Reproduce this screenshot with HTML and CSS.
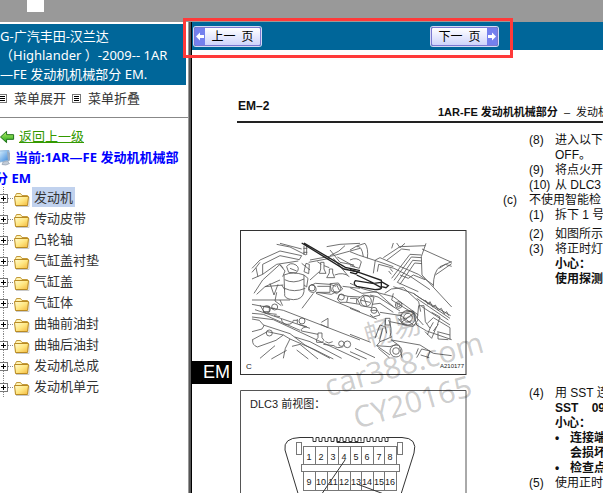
FILE: index.html
```
<!DOCTYPE html>
<html lang="zh-CN">
<head>
<meta charset="utf-8">
<title>广汽丰田-汉兰达 维修手册</title>
<link rel="stylesheet" href="styles.css">
</head>
<body>
<svg class="defs" aria-hidden="true">
  <defs>
    <linearGradient id="gold" x1="0" y1="0" x2="1" y2="1"><stop offset="0" stop-color="#fffbd0"/><stop offset=".5" stop-color="#ffe783"/><stop offset="1" stop-color="#f3b83c"/></linearGradient>
    <linearGradient id="leaf" x1="0" y1="0" x2="0" y2="1"><stop offset="0" stop-color="#b8f06a"/><stop offset="1" stop-color="#1fa51a"/></linearGradient>
    <linearGradient id="screen" x1="0" y1="0" x2="1" y2="1"><stop offset="0" stop-color="#d9f1ff"/><stop offset="1" stop-color="#2f80d8"/></linearGradient>
    <symbol id="folder" viewBox="0 0 16 15">
      <path d="M2 14.5h13V5" fill="none" stroke="#c9c9c9"/>
      <path d="M1.5 12.500V3.500L2.500 1.500H6.500L8 3.500H13.500V5" fill="#fff3b0" stroke="#c39a3b"/>
      <path d="M.5 4.500H14.500L13.500 13.500H1.500Z" fill="url(#gold)" stroke="#b98a22"/>
    </symbol>
    <symbol id="plus" viewBox="0 0 14 21">
      <path d="M3.500 0V21" stroke="#888" stroke-dasharray="1 1"/>
      <path d="M8 11.500H14" stroke="#888" stroke-dasharray="1 1"/>
      <rect x="-.5" y="7.500" width="8" height="8" fill="#fff" stroke="#777"/>
      <path d="M1 11.500H6M3.500 9V14" stroke="#000"/>
    </symbol>
    <symbol id="menu" viewBox="0 0 9 9">
      <rect x=".5" y=".5" width="8" height="8" fill="#fff" stroke="#777"/>
      <path d="M2 2.500H7M2 4.500H7M2 6.500H7" stroke="#000"/>
    </symbol>
  </defs>
</svg>

<header class="topband"><span class="chip"></span></header>

<div class="frames">
  <aside class="sidebar">
    <h1 class="book">G-广汽丰田-汉兰达<br>（Highlander ）-2009-- 1AR<br>—FE 发动机机械部分 EM.</h1>
    <div class="tools">
      <button type="button"><svg class="menu-icon"><use href="#menu"/></svg>菜单展开</button>
      <button type="button"><svg class="menu-icon"><use href="#menu"/></svg>菜单折叠</button>
    </div>
    <nav class="nav">
      <a class="back" href="#"><svg class="back-icon" viewBox="0 0 16 14"><path d="M.5 7L7 1V4.500H14.500V9.500H7V13Z" fill="url(#leaf)" stroke="#176b12"/></svg><span>返回上一级</span></a>
      <p class="current"><svg class="pc-icon" viewBox="0 0 20 16"><path d="M4 1L14 .5L14.500 10L5 12Z" fill="url(#screen)" stroke="#8db6dc"/><path d="M12 1L15 3V10L13 12" fill="#9aaabe"/><path d="M8 12L12 11L14.500 13.500Q11 16 7 14.500Z" fill="#c3ccd8" stroke="#8a97a8" stroke-width=".6"/></svg>当前:1AR—FE 发动机机械部<br>分 EM</p>
      <ul class="tree">
        <li><svg class="plus"><use href="#plus"/></svg><svg class="folder"><use href="#folder"/></svg><a class="selected" href="#">发动机</a></li>
        <li><svg class="plus"><use href="#plus"/></svg><svg class="folder"><use href="#folder"/></svg><a href="#">传动皮带</a></li>
        <li><svg class="plus"><use href="#plus"/></svg><svg class="folder"><use href="#folder"/></svg><a href="#">凸轮轴</a></li>
        <li><svg class="plus"><use href="#plus"/></svg><svg class="folder"><use href="#folder"/></svg><a href="#">气缸盖衬垫</a></li>
        <li><svg class="plus"><use href="#plus"/></svg><svg class="folder"><use href="#folder"/></svg><a href="#">气缸盖</a></li>
        <li><svg class="plus"><use href="#plus"/></svg><svg class="folder"><use href="#folder"/></svg><a href="#">气缸体</a></li>
        <li><svg class="plus"><use href="#plus"/></svg><svg class="folder"><use href="#folder"/></svg><a href="#">曲轴前油封</a></li>
        <li><svg class="plus"><use href="#plus"/></svg><svg class="folder"><use href="#folder"/></svg><a href="#">曲轴后油封</a></li>
        <li><svg class="plus"><use href="#plus"/></svg><svg class="folder"><use href="#folder"/></svg><a href="#">发动机总成</a></li>
        <li><svg class="plus"><use href="#plus"/></svg><svg class="folder"><use href="#folder"/></svg><a href="#">发动机单元</a></li>
      </ul>
    </nav>
  </aside>

  <main class="reader">
    <div class="pager">
      <button type="button" class="page-btn"><svg class="arrow" viewBox="0 0 10 17"><path d="M1 8.500L5 4.500V7H9V10H5V12.500Z" fill="#fff"/></svg><span>上一&nbsp; 页</span></button>
      <button type="button" class="page-btn"><span>下一&nbsp; 页</span><svg class="arrow" viewBox="0 0 10 17"><path d="M9 8.500L5 4.500V7H1V10H5V12.500Z" fill="#fff"/></svg></button>
    </div>

    <article class="sheet">
      <div class="sheet-head">
        <strong class="folio">EM–2</strong>
        <span class="chapter"><b>1AR-FE 发动机机械部分</b> &nbsp;– &nbsp;发动机</span>
      </div>
      <div class="sheet-body">
        <span class="tab">EM</span>
        <div class="figures">
          <svg class="figure" viewBox="240 230 227 145" role="img" aria-label="发动机舱">
            <g transform="translate(230 225) scale(.33333)" fill="none" stroke="#555" stroke-width="2.500">
              <path d="M140 58L180 66L228 90M150 55L215 72M66 130L90 105L150 78L215 92L208 104L150 92L98 118L98 148L66 162M66 142L78 128L90 112M78 128L84 156M98 148L140 118L205 108M72 205L98 165L150 118L160 130M80 208L105 185L150 165M105 185L160 180"/>
              <path d="M162 150Q190 138 222 150V200Q218 224 190 224Q160 222 164 205ZM164 164Q190 178 222 162M164 190Q192 204 226 190M155 180L165 195M170 125Q180 110 198 120Q212 130 198 144L176 142ZM180 130L200 138M150 120L165 138L158 155M222 150L234 160L230 186L222 180"/>
              <path d="M222 62V90M230 62V90M220 70H232M220 82H232M240 105L310 92L390 70M236 112L300 100M290 65L330 58L390 55M300 92Q330 80 345 62M300 75L330 112L372 120M310 100L352 150M322 96L375 125"/>
              <path d="M228 115L238 118L236 146L222 140ZM215 115L240 135M272 112H282V132L288 145H268L272 132ZM298 132H308V144L314 158H290L298 144ZM282 122L298 128M262 110L274 118M314 150Q340 140 358 155"/>
              <path d="M240 165L268 140M246 180L256 175L300 178L318 184M258 202L304 208L320 200M250 205L216 250M246 178Q234 182 236 196Q248 208 258 198Q260 182 246 178ZM262 184H300V202H262M300 176L325 174L338 192L320 206L304 198ZM320 180L328 196M338 184L390 190M330 208L354 214L350 232H330L322 222ZM354 214L390 216M350 232L390 238M258 205L390 260M360 220H380V235"/>
              <path d="M66 225H180M66 238L160 256L390 345M75 254L240 310M66 265L100 268L210 316M66 276L130 284L390 405M90 240L104 264L140 268M98 244H118V260H100M122 250H134M140 202L135 228L154 242M120 175L132 210L144 178M150 225L158 242"/>
              <circle cx="134" cy="246" r="9"/><circle cx="110" cy="253" r="11"/><circle cx="216" cy="288" r="9"/><circle cx="118" cy="324" r="9"/><circle cx="352" cy="358" r="10"/><circle cx="334" cy="356" r="8"/><circle cx="334" cy="216" r="9"/><circle cx="246" cy="189" r="9"/><circle cx="320" cy="190" r="12"/>
              <path d="M154 282Q158 300 172 298Q188 298 190 286H202M202 282V296M132 272L150 275M206 298L230 305Q210 310 214 318L264 328M260 352Q256 342 264 338V324H276V338L282 346L276 352ZM280 358L312 362Q320 372 340 365M274 292L294 280V308L272 298M286 350Q296 358 308 350M66 282L88 286L102 302L96 312L66 320M66 345L112 320L160 330L138 346L82 366Q66 360 68 345M100 300L180 326L225 360L300 400M160 330L180 342L166 370L160 400M90 400L135 362M124 402L170 376M180 342L250 372L310 402M194 336L240 350L335 400M186 364L210 358L264 402M200 375L235 402"/>
              <path d="M215 54L342 132L390 142M222 54L346 127L390 137" stroke="#222" stroke-width="4"/>
            </g>
            <g transform="translate(350 225) scale(.33333)" fill="none" stroke="#555" stroke-width="2.500">
              <path d="M0 75Q20 60 45 55Q56 70 52 100M20 65Q35 60 40 95M0 80L25 90L80 108L130 125M0 105Q20 95 34 110L28 130L0 122M70 145L76 105L90 98L140 120L205 148L250 180M82 140L86 118L132 130L182 155L240 194M100 98L150 65L226 62M110 106L155 72L180 75M140 54L150 68L165 55M130 54L125 70"/>
              <path d="M228 55L214 95L216 150L305 246M216 72L305 112M250 185Q250 140 270 125L305 110M256 150L305 116M268 130L286 118L305 124M214 90L180 88L125 160M214 98L184 96L132 166M214 108L188 106L142 172M216 116L194 114L150 178M150 150L175 160L190 150L225 164M142 172L205 200M130 185L190 205L300 280M120 130L128 140M116 138L124 148"/>
              <path d="M0 175L40 192L130 215L150 230L205 270M0 188L36 205L80 200L130 245M22 222L40 210L72 216L65 248L32 242ZM30 225L60 232M40 212L50 242M60 210L84 216L150 258M66 238L90 235L130 262M62 256H82L90 270L70 276L60 268M90 262L155 272M104 205L124 192L160 188L206 230L212 260M130 205L125 225L195 268"/>
              <circle cx="48" cy="228" r="16"/><circle cx="72" cy="256" r="9"/><circle cx="146" cy="240" r="10"/><circle cx="146" cy="240" r="5"/><circle cx="174" cy="278" r="22"/><circle cx="174" cy="278" r="13"/><circle cx="138" cy="378" r="18"/><circle cx="138" cy="378" r="10"/>
              <path d="M206 242H222L226 290L240 310L232 330M206 242L202 280L220 300M145 264L190 258L204 285L190 304L160 300L145 280M150 270L190 300M154 292L192 264M190 205L208 218L302 272M200 220L295 285M214 244L300 300M226 225L234 238L240 230L248 246L256 240L265 256L274 250L282 266L290 260L296 272M245 262L270 276L262 300M232 295L250 278L270 290L300 308V344M240 310L250 292M250 318L265 298M225 320L245 340L260 304M262 320L300 330M264 322V342L295 344M190 262L200 300L230 318L305 344"/>
              <path d="M106 285Q102 300 110 325M116 285Q128 310 120 335M106 280H120V300H106ZM120 290L170 300M126 335Q105 345 90 350L80 362L120 365L140 358M88 350L98 310M75 340L90 300L104 305M80 362L120 390M85 370L118 398M124 345L210 360L250 385L305 392M124 345L148 362L156 398M0 250L80 282M0 328L62 352M15 370L75 398M0 380L50 402M200 398L215 372L240 378L232 400M212 390L238 398M205 370L198 388"/>
              <path d="M0 134L20 140L94 166V190Q90 194 75 194L20 184Q8 176 16 167L72 176L94 188M20 150L72 175L94 172M94 170L115 182L108 188L92 184M0 142L18 147L24 140" stroke="#222" stroke-width="4"/>
            </g>
            <rect x="240.500" y="230.500" width="225.500" height="144" fill="none" stroke="#333"/>
            <text x="246" y="369" font-size="8">C</text>
            <text x="440" y="368" font-size="6">A210177</text>
          </svg>
          <svg class="figure" viewBox="240 390 227 145" role="img" aria-label="DLC3 前视图">
            <path d="M240.500 535V390.500H466V535" fill="none" stroke="#555"/>
            <text x="250" y="408" font-size="11">DLC3 前视图：</text>
            <path d="M313 437.500H300Q283 438 285 450L303 510H396L414 453Q418 438 402 437.500H386" fill="none" stroke="#333"/>
            <path d="M313 437.500v4h3v-4h3v4h3v-4h3v4h3v-4h3v4h3v-4h3v5h27v-5h3v4h3v-4h3v4h3v-4h3v4h3v-4h3v4h3v-4h2M337 437.500v4h3v-4h3v4h3v-4h3v4h3v-4h3v4h3v-4h3v4" fill="none" stroke="#333"/>
            <g fill="none" stroke="#777">
              <rect x="296.500" y="442.500" width="5" height="12"/><rect x="397.500" y="442.500" width="5" height="12"/>
              <rect x="303.500" y="446.500" width="93" height="18"/><rect x="301.500" y="464.500" width="98" height="7"/><rect x="303.500" y="471.500" width="93" height="19"/>
              <path d="M315.500 447v17M327.500 447v17M338.500 447v17M350.500 447v17M361.500 447v17M373.500 447v17M384.500 447v17M315.500 472v18M327.500 472v18M338.500 472v18M350.500 472v18M361.500 472v18M373.500 472v18M384.500 472v18"/>
            </g>
            <g font-size="9" text-anchor="middle">
              <text x="309" y="460">1</text><text x="321" y="460">2</text><text x="333" y="460">3</text><text x="344" y="460">4</text><text x="356" y="460">5</text><text x="367" y="460">6</text><text x="379" y="460">7</text><text x="390" y="460">8</text>
              <text x="309" y="485">9</text><text x="321" y="485">10</text><text x="333" y="485">11</text><text x="344" y="485">12</text><text x="356" y="485">13</text><text x="367" y="485">14</text><text x="379" y="485">15</text><text x="390" y="485">16</text>
            </g>
            <path d="M345 460L317 501M357 484L400 500" stroke="#333"/>
          </svg>
          <svg class="watermark" viewBox="240 230 260 210" aria-hidden="true">
            <text transform="translate(368 347) rotate(-16)" font-size="29">畅易</text>
            <text transform="translate(328 397) rotate(-16)" font-size="30">car388.com</text>
            <text transform="translate(357 429) rotate(-16)" font-size="30">CY20165</text>
          </svg>
        </div>
        <div class="steps">
          <section>
            <p class="step"><span>(8)</span><span>进入以下<br>OFF。</span></p>
            <p class="step"><span>(9)</span><span>将点火开</span></p>
            <p class="step"><span>(10)</span><span>从 DLC3</span></p>
            <p class="item"><span>(c)</span><span>不使用智能检</span></p>
            <p class="step"><span>(1)</span><span>拆下 1 号</span></p>
          </section>
          <section class="next">
            <p class="step"><span>(2)</span><span>如图所示</span></p>
            <p class="step"><span>(3)</span><span>将正时灯<br><b>小心：<br>使用探测</b></span></p>
          </section>
          <section class="below">
            <p class="step"><span>(4)</span><span>用 SST 连<br><b>SST &nbsp; &nbsp;09<br>小心：</b></span></p>
            <ul class="notes">
              <li>连接端<br>会损坏</li>
              <li>检查点</li>
            </ul>
            <p class="step"><span>(5)</span><span>使用正时</span></p>
          </section>
        </div>
      </div>
    </article>
  </main>
</div>
<div class="callout" aria-hidden="true"></div>
</body>
</html>
```
FILE: styles.css
```
* { box-sizing: border-box; }

body {
  margin: 0;
  height: 100vh;
  overflow: hidden;
  display: flex;
  flex-direction: column;
  background: #fff;
  color: #333;
  font: 13px/21px "Noto Sans", "Noto Sans CJK SC", sans-serif;
}

p, h1, ul { margin: 0; padding: 0; }
ul { list-style: none; }
svg { display: block; flex: none; }
button { border: 0; padding: 0; background: none; color: inherit; font: inherit; cursor: pointer; }

.defs { position: absolute; width: 0; height: 0; }

.topband { flex: none; height: 22px; padding-left: 27px; background: #999; }
.chip { display: block; width: 17px; height: 12px; background: #fff; }

.frames { flex: 1; min-height: 0; display: flex; }

/* Sidebar */
.sidebar {
  flex: none;
  width: 192px;
  padding-top: 2px;
  overflow: hidden;
  white-space: nowrap;
  border-right: 1px solid #000;
  box-shadow: inset -2px 0 #555, inset -3px 0 #999;
}
.book {
  margin-right: 5px;
  padding: 3px 0 1px;
  background: #069;
  color: #fff;
  font-size: 13px;
  font-weight: 400;
  line-height: 19px;
}
.tools {
  display: flex;
  gap: 6px;
  margin-right: 3px;
  padding: 3px 0 8px;
  border-bottom: 1px solid #888;
}
.tools button { display: flex; align-items: center; gap: 7px; }
.tools button:first-child { margin-left: -2px; }
.menu-icon { width: 9px; height: 9px; }

.nav { padding-top: 8px; }
.back { display: flex; align-items: center; gap: 4px; color: #390; text-decoration: underline; }
.back-icon { width: 15px; height: 14px; }
.current { margin-left: -5px; color: #00f; font-weight: 700; }
.pc-icon { display: inline-block; width: 20px; height: 16px; vertical-align: middle; }

.tree { margin-top: -2px; }
.tree li { display: flex; height: 21px; }
.tree a { height: 20px; padding: 0 2px; color: #333; line-height: 20px; text-decoration: none; }
.tree .selected { background: #c1d2ee; }
.plus { width: 14px; height: 21px; }
.folder { width: 16px; height: 15px; margin: 5px 2px 0 0; }

/* Reader */
.reader { flex: 1; min-width: 0; overflow: hidden; }
.pager { display: flex; gap: 170px; align-items: center; height: 28px; padding-left: 2px; background: #069; }
.page-btn {
  display: flex;
  align-items: center;
  width: 67px;
  height: 19px;
  flex: none;
  border: 1px solid #7b78d0;
  border-radius: 2px;
  background: linear-gradient(#fff, #cfd4fb);
  box-shadow: 0 0 0 1px #d5d8f5;
  color: #000;
  font-size: 12px;
  line-height: 17px;
}
.page-btn span { flex: 1; text-align: center; }
.arrow { width: 10px; height: 17px; background: #7480ee; }

.sheet {
  padding-top: 46px;
  color: #111;
  font: 12px/15px "Liberation Sans", "Noto Sans CJK SC", sans-serif;
  white-space: nowrap;
}
.sheet-head {
  display: grid;
  grid-template-columns: 200px 1fr;
  min-height: 27px;
  margin-left: 45px;
  padding-left: 1px;
  border-bottom: 2px solid #222;
}
.folio { line-height: 20px; }
.chapter { align-self: end; font-size: 11px; line-height: 18px; }

.sheet-body { display: flex; align-items: flex-start; }
.tab {
  flex: none;
  width: 40px;
  margin: 238px 8px 0 0;
  padding-right: 2px;
  background: #000;
  color: #fff;
  font-size: 18px;
  line-height: 23px;
  text-align: right;
}
.figures {
  position: relative;
  flex: none;
  display: grid;
  gap: 15px;
  width: 227px;
  margin: 107px 36px 0 0;
}
.figure { width: 227px; height: 145px; fill: #222; }
.watermark {
  position: absolute;
  top: 0;
  left: 0;
  width: 260px;
  height: 210px;
  overflow: visible;
  fill: #000;
  fill-opacity: .2;
  font-family: "Noto Sans", "Noto Sans CJK SC", sans-serif;
}

.steps { padding-top: 10px; }
.step, .item { display: grid; grid-template-columns: 26px 1fr; }
.step { margin-left: 26px; }
.next { margin-top: 4px; }
.below { margin-top: 99px; }
.notes { margin-left: 52px; font-weight: 700; }
.notes li { display: grid; grid-template-columns: 15px 1fr; }
.notes li::before { content: "•"; }

/* Highlight drawn over the pager */
.callout {
  position: absolute;
  top: 18px;
  left: 183px;
  width: 330px;
  height: 40px;
  border: 3px solid #ff3a3a;
}
```
